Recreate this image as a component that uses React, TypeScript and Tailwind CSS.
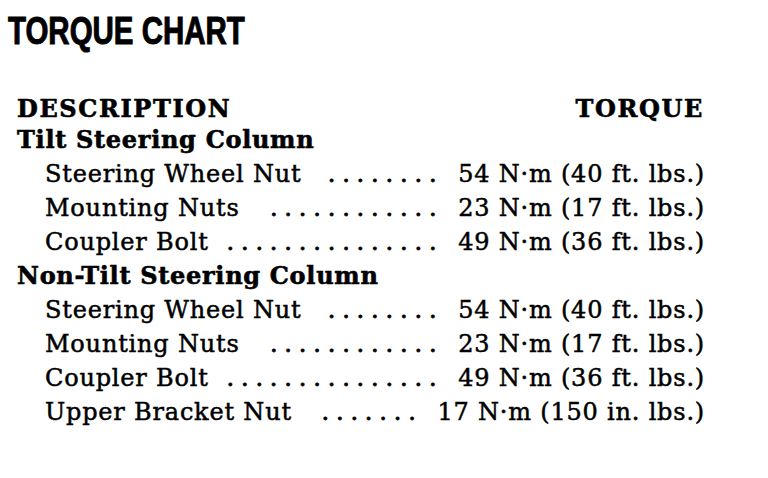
import React from "react";

const serif = { fontFamily: '"DejaVu Serif", "Liberation Serif", serif' };

type Row = { label: string; dots: number; value: string };

const tilt: Row[] = [
  { label: "Steering Wheel Nut", dots: 8, value: "54 N·m (40 ft. lbs.)" },
  { label: "Mounting Nuts", dots: 12, value: "23 N·m (17 ft. lbs.)" },
  { label: "Coupler Bolt", dots: 15, value: "49 N·m (36 ft. lbs.)" },
];

const nonTilt: Row[] = [
  { label: "Steering Wheel Nut", dots: 8, value: "54 N·m (40 ft. lbs.)" },
  { label: "Mounting Nuts", dots: 12, value: "23 N·m (17 ft. lbs.)" },
  { label: "Coupler Bolt", dots: 15, value: "49 N·m (36 ft. lbs.)" },
  { label: "Upper Bracket Nut", dots: 7, value: "17 N·m (150 in. lbs.)" },
];

function dotString(n: number) {
  return Array.from({ length: n }, () => ".").join(" ");
}

function Item({ row }: { row: Row }) {
  return (
    <div className="flex items-baseline h-[34px] leading-[34px] pl-[45px] whitespace-nowrap [-webkit-text-stroke:0.5px_black]">
      <span className="tracking-[0.8px] shrink-0">{row.label}</span>
      <div className="flex-1 min-w-0 flex justify-end overflow-hidden">
        <span className="tracking-[-0.4px] [-webkit-text-stroke:0.8px_black]">{dotString(row.dots)}</span>
      </div>
      <span className="tracking-[0.8px] ml-[22px] shrink-0">{row.value}</span>
    </div>
  );
}

function Group({ title, rows }: { title: string; rows: Row[] }) {
  return (
    <div>
      <div className="h-[34px] leading-[34px] pl-[17px] font-bold tracking-[0.7px] whitespace-nowrap [-webkit-text-stroke:0.6px_black]">
        {title}
      </div>
      {rows.map((r, i) => (
        <Item key={i} row={r} />
      ))}
    </div>
  );
}

export default function App() {
  return (
    <div className="w-[768px] h-[478px] bg-white text-black overflow-hidden">
      <div className="pt-[9px] pl-[8px] h-[53px]">
        <div
          className="text-[38px] leading-[44px] font-bold origin-left scale-x-[0.775] whitespace-nowrap [-webkit-text-stroke:1px_black]"
          style={{ fontFamily: '"Liberation Sans", Arial, sans-serif' }}
        >
          TORQUE CHART
        </div>
      </div>
      <div className="w-[705px] text-[24px] mt-[38px]" style={serif}>
        <div className="flex justify-between h-[32px] leading-[36px] pl-[17px] font-bold tracking-[1.6px] whitespace-nowrap [-webkit-text-stroke:0.6px_black]">
          <span>DESCRIPTION</span>
          <span className="pr-[1px]">TORQUE</span>
        </div>
        <Group title="Tilt Steering Column" rows={tilt} />
        <Group title="Non-Tilt Steering Column" rows={nonTilt} />
      </div>
    </div>
  );
}
